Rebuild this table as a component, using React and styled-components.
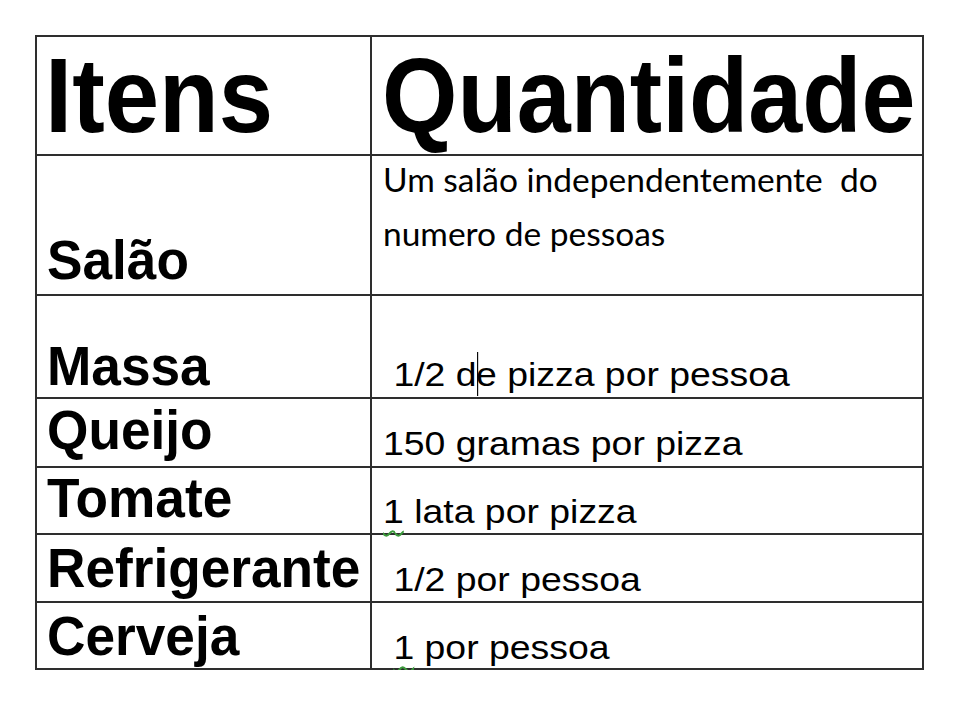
import React from 'react';
import styled, { createGlobalStyle } from 'styled-components';

const lineColor = '#2e2e2e';
const arial = '"Liberation Sans", Arial, sans-serif';

const GlobalStyle = createGlobalStyle`
  body {
    margin: 0;
    background: #fff;
    color: #000;
  }
`;

const Sheet = styled.div`
  padding: 35px 0 0 35px;
`;

const Grid = styled.div`
  display: grid;
  grid-template-columns: 335px 552px;
  grid-template-rows: 119px 140px 103px 69px 67px 68px 67px;
  width: max-content;
  border-top: 2px solid ${lineColor};
  border-left: 2px solid ${lineColor};
`;

const Cell = styled.div`
  display: flex;
  flex-direction: column;
  justify-content: ${(p) => (p.$top ? 'flex-start' : 'flex-end')};
  align-items: flex-start;
  padding: 0 0 ${(p) => p.$pb ?? 5}px ${(p) => p.$pl ?? 10}px;
  border-right: 2px solid ${lineColor};
  border-bottom: 2px solid ${lineColor};
  white-space: pre;
`;

const Heading = styled.span`
  display: inline-block;
  font: bold 106px/1 ${arial};
  transform: scaleX(${(p) => p.$scale ?? 0.922});
  transform-origin: left bottom;
`;

const Item = styled.span`
  display: inline-block;
  font: bold 56px/1 ${arial};
  transform: scaleX(0.95);
  transform-origin: left bottom;
`;

const Amount = styled.span`
  display: inline-block;
  font: 33px/1 ${arial};
  transform: scaleX(1.133);
  transform-origin: left bottom;
`;

const Note = styled.p`
  margin: -4px 0 0;
  font: 33.5px/54px Lato, "Open Sans", sans-serif;
  white-space: normal;
`;

// text cursor sitting inside "de"
const Caret = styled.span`
  display: inline-block;
  width: 0;
  height: 44px;
  border-left: 1.5px solid #000;
  margin-right: -1.5px;
  vertical-align: -10px;
`;

// spell-check squiggle
const Spell = styled.span`
  text-decoration: underline wavy #3c9a3c;
  text-decoration-thickness: 1.5px;
  text-underline-offset: 7px;
`;

const rows = [
  { item: 'Massa', itemPb: 3, amount: <> 1/2 d<Caret />e pizza por pessoa</>, amountPb: 1 },
  { item: 'Queijo', itemPb: 8, amount: '150 gramas por pizza', amountPb: 6 },
  { item: 'Tomate', itemPb: 7, amount: <><Spell>1</Spell> lata por pizza</>, amountPb: 5 },
  { item: 'Refrigerante', itemPb: 5, amount: ' 1/2 por pessoa', amountPb: 5 },
  { item: 'Cerveja', itemPb: 4, amount: <> <Spell>1</Spell> por pessoa</>, amountPb: 4 },
];

export default function App() {
  return (
    <Sheet>
      <GlobalStyle />
      <Grid>
        <Cell $pl={8} $pb={6}>
          <Heading>Itens</Heading>
        </Cell>
        <Cell $pl={10} $pb={6}>
          <Heading $scale={0.915}>Quantidade</Heading>
        </Cell>

        <Cell $pb={6}>
          <Item>Salão</Item>
        </Cell>
        <Cell $top $pl={11}>
          <Note>
            Um salão independentemente&nbsp; do
            <br />
            numero de pessoas
          </Note>
        </Cell>

        {rows.map((row) => (
          <React.Fragment key={row.item}>
            <Cell $pb={row.itemPb}>
              <Item>{row.item}</Item>
            </Cell>
            <Cell $pl={11} $pb={row.amountPb}>
              <Amount>{row.amount}</Amount>
            </Cell>
          </React.Fragment>
        ))}
      </Grid>
    </Sheet>
  );
}
